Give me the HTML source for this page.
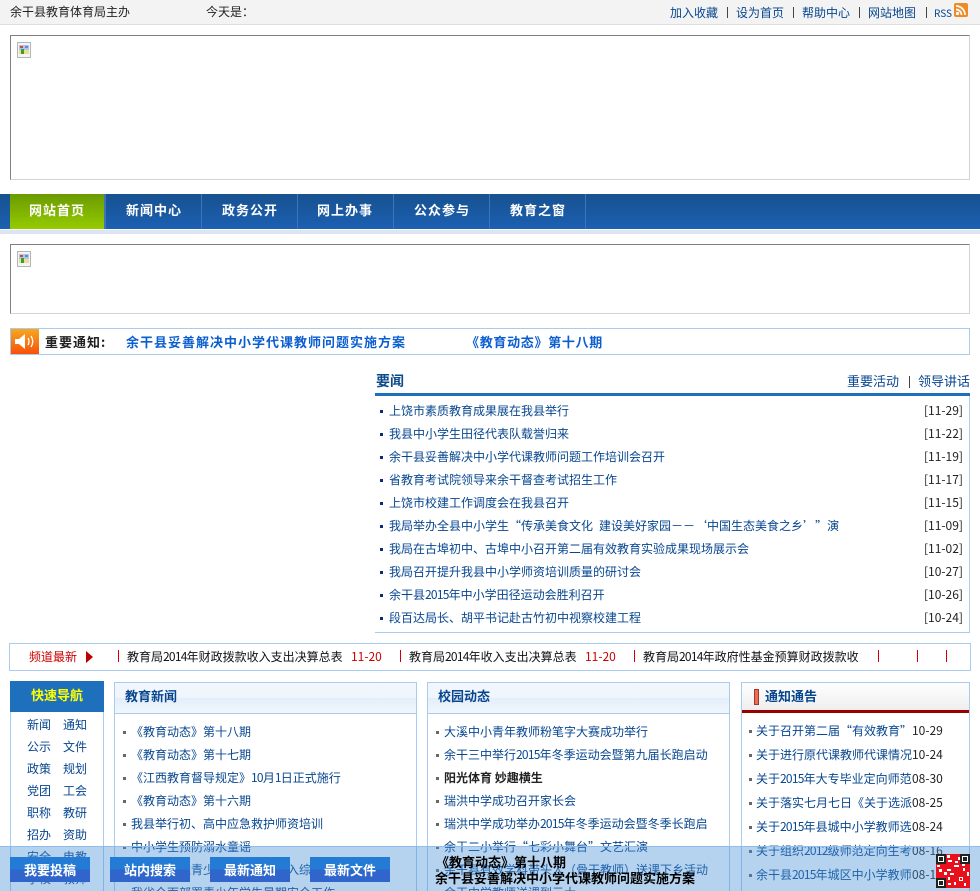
<!DOCTYPE html>
<html lang="zh"><head><meta charset="utf-8"><title>余干县教育体育局</title>
<style>
html,body{margin:0;padding:0;background:#fff;width:980px;height:891px;overflow:hidden}
#w{position:relative;width:980px;height:891px;overflow:hidden;font:12px/14px "WenQuanYi Zen Hei","Noto Sans CJK SC",sans-serif;color:#222}
.a,.t{position:absolute}
.t{white-space:nowrap;line-height:14px}
.l{color:#07468f}
.b{font-weight:bold}
.blt{position:absolute;width:3px;height:3px;background:#666}
.n{position:absolute;width:3px;height:3px;background:#0a2a80}
.img{position:absolute;left:10px;width:958px;border:1px solid;border-color:#808080 #d4d4d4 #d4d4d4 #808080;background:#fff}
.nv{position:absolute;top:202px;color:#fff;font-weight:bold;font-size:13px;letter-spacing:1px;line-height:16px;white-space:nowrap}
.sep{position:absolute;top:194px;height:35px;width:1px;background:#3f75b8}
.p{position:absolute;top:682px;height:209px;border:1px solid #a9cbee;border-bottom:0;box-sizing:border-box;background:#fff}
.ph{position:absolute;left:0;right:0;top:0;height:30px;background:linear-gradient(#f2f7fd 0,#eef5fc 50%,#e3eefa 50%,#f1f6fc 100%);border-bottom:1px solid #a9cbee}
.pt{position:absolute;top:6px;font-size:13px;font-weight:bold;color:#07468f;line-height:14px;white-space:nowrap}
.btn{position:absolute;top:857px;width:80px;height:25px;background:linear-gradient(#237bd6 0,#237bd6 50%,#3066cc 50%,#3066cc 100%);color:#fff;font-weight:bold;font-size:13px;line-height:25px;text-align:center}
.r{color:#c00}
.d{text-decoration:none;letter-spacing:-.75px}
.qo,.qc{display:inline-block;width:12px}
.qo{text-align:right}.qc{text-align:left}
.sp{display:inline-block;width:6px}
.bar{position:absolute;width:1px;height:12px;top:650px;background:#c00}
.hb{position:absolute;width:1px;height:11px;top:7px;background:#444}
</style></head><body><div id="w">

<!-- top bar -->
<div class="a" style="left:0;top:0;width:980px;height:24px;background:#f3f3f3;border-bottom:1px solid #ddd"></div>
<span class="t" style="left:10px;top:5px">余干县教育体育局主办</span>
<span class="t" style="left:206px;top:5px">今天是：</span>
<span class="t l" style="left:670px;top:6px">加入收藏</span>
<i class="hb" style="left:727px"></i>
<span class="t l" style="left:736px;top:6px">设为首页</span>
<i class="hb" style="left:793px"></i>
<span class="t l" style="left:802px;top:6px">帮助中心</span>
<i class="hb" style="left:859px"></i>
<span class="t l" style="left:868px;top:6px">网站地图</span>
<i class="hb" style="left:926px"></i>
<span class="t l" style="left:934px;top:6px;font-size:10px">RSS</span>
<svg class="a" style="left:954px;top:3px" width="14" height="14" viewBox="0 0 14 14"><rect width="14" height="14" rx="2" fill="#f08a24"/><circle cx="3.5" cy="10.5" r="1.6" fill="#fff"/><path d="M2 6.5a5.500 5.500 0 0 1 5.500 5.500M2 3a9 9 0 0 1 9 9" fill="none" stroke="#fff" stroke-width="1.700"/></svg>

<!-- banner -->
<div class="img" style="top:35px;height:143px"></div>
<svg class="a" style="left:17px;top:42px" width="14" height="16" viewBox="0 0 14 16"><rect x=".5" y=".5" width="13" height="15" fill="#f4f4f4" stroke="#b5b5b5"/><rect x="2" y="3" width="10" height="9" fill="#a8c8f0"/><rect x="2" y="8" width="10" height="4" fill="#e8e08a"/><rect x="3" y="4" width="3" height="2" fill="#d64a30"/><rect x="4" y="7" width="3" height="5" fill="#3d9a3d"/><rect x="8" y="4" width="3" height="2" fill="#7a80d8"/></svg>

<!-- nav -->
<div class="a" style="left:0;top:194px;width:980px;height:35px;background:linear-gradient(#17518f,#1c60b2)"></div>
<div class="a" style="left:0;top:230px;width:980px;height:4px;background:#dde5f2"></div>
<div class="a" style="left:10px;top:194px;width:94px;height:35px;background:linear-gradient(#6a9a00,#96cc00)"></div>
<div class="sep" style="left:104px;width:2px"></div><div class="sep" style="left:201px"></div><div class="sep" style="left:297px"></div><div class="sep" style="left:393px"></div><div class="sep" style="left:489px"></div><div class="sep" style="left:585px"></div>
<span class="nv" style="left:29px">网站首页</span>
<span class="nv" style="left:126px">新闻中心</span>
<span class="nv" style="left:222px">政务公开</span>
<span class="nv" style="left:317px">网上办事</span>
<span class="nv" style="left:414px">公众参与</span>
<span class="nv" style="left:510px">教育之窗</span>

<!-- second banner -->
<div class="img" style="top:244px;height:68px"></div>
<svg class="a" style="left:17px;top:251px" width="14" height="16" viewBox="0 0 14 16"><rect x=".5" y=".5" width="13" height="15" fill="#f4f4f4" stroke="#b5b5b5"/><rect x="2" y="3" width="10" height="9" fill="#a8c8f0"/><rect x="2" y="8" width="10" height="4" fill="#e8e08a"/><rect x="3" y="4" width="3" height="2" fill="#d64a30"/><rect x="4" y="7" width="3" height="5" fill="#3d9a3d"/><rect x="8" y="4" width="3" height="2" fill="#7a80d8"/></svg>

<!-- notice -->
<div class="a" style="left:10px;top:328px;width:958px;height:25px;border:1px solid #a9cbee"></div>
<div class="a" style="left:11px;top:329px;width:28px;height:25px;background:linear-gradient(#f6a820,#f8500a)"></div>
<svg class="a" style="left:13px;top:331px" width="22" height="21" viewBox="0 0 22 21"><path d="M2 8h4l6-5v15l-6-5H2z" fill="#fff"/><path d="M15 7q2 3.500 0 7M18 5q3.500 5.500 0 11" fill="none" stroke="#fff" stroke-width="1.300"/></svg>
<span class="t b" style="left:45px;top:335px;font-size:13px;color:#222;letter-spacing:1px">重要通知:</span>
<span class="t b" style="left:126px;top:335px;font-size:13px;color:#0a5ed0;letter-spacing:1px">余干县妥善解决中小学代课教师问题实施方案</span>
<span class="t b" style="left:466px;top:335px;font-size:13px;color:#0a5ed0;letter-spacing:.7px">《教育动态》第十八期</span>

<!-- headline news -->
<span class="t b" style="left:376px;top:374px;font-size:14px;color:#0b4a8c">要闻</span>
<span class="t l" style="left:847px;top:374px;font-size:13px">重要活动</span>
<i class="hb" style="left:909px;top:376px;height:12px"></i>
<span class="t l" style="left:918px;top:374px;font-size:13px">领导讲话</span>
<div class="a" style="left:375px;top:393px;width:595px;height:3px;background:#1e70bd"></div>
<div class="a" style="left:969px;top:396px;width:1px;height:237px;background:#a9cbee"></div>
<div class="a" style="left:375px;top:632px;width:595px;height:1px;background:#a9cbee"></div>

<i class="n" style="left:380px;top:410px"></i><span class="t l" style="left:389px;top:404px">上饶市素质教育成果展在我县举行</span><span class="t" style="left:924px;top:404px">[11-29]</span>
<i class="n" style="left:380px;top:433px"></i><span class="t l" style="left:389px;top:427px">我县中小学生田径代表队载誉归来</span><span class="t" style="left:924px;top:427px">[11-22]</span>
<i class="n" style="left:380px;top:456px"></i><span class="t l" style="left:389px;top:450px">余干县妥善解决中小学代课教师问题工作培训会召开</span><span class="t" style="left:924px;top:450px">[11-19]</span>
<i class="n" style="left:380px;top:479px"></i><span class="t l" style="left:389px;top:473px">省教育考试院领导来余干督查考试招生工作</span><span class="t" style="left:924px;top:473px">[11-17]</span>
<i class="n" style="left:380px;top:502px"></i><span class="t l" style="left:389px;top:496px">上饶市校建工作调度会在我县召开</span><span class="t" style="left:924px;top:496px">[11-15]</span>
<i class="n" style="left:380px;top:525px"></i><span class="t l" style="left:389px;top:519px">我局举办全县中小学生<span class="qo">“</span>传承美食文化<span class="sp"></span>建设美好家园－－<span class="qo">‘</span>中国生态美食之乡<span class="qc">’</span><span class="qc">”</span>演</span><span class="t" style="left:924px;top:519px">[11-09]</span>
<i class="n" style="left:380px;top:548px"></i><span class="t l" style="left:389px;top:542px">我局在古埠初中、古埠中小召开第二届有效教育实验成果现场展示会</span><span class="t" style="left:924px;top:542px">[11-02]</span>
<i class="n" style="left:380px;top:571px"></i><span class="t l" style="left:389px;top:565px">我局召开提升我县中小学师资培训质量的研讨会</span><span class="t" style="left:924px;top:565px">[10-27]</span>
<i class="n" style="left:380px;top:594px"></i><span class="t l" style="left:389px;top:588px">余干县<u class="d">2015</u>年中小学田径运动会胜利召开</span><span class="t" style="left:924px;top:588px">[10-26]</span>
<i class="n" style="left:380px;top:617px"></i><span class="t l" style="left:389px;top:611px">段百达局长、胡平书记赴古竹初中视察校建工程</span><span class="t" style="left:924px;top:611px">[10-24]</span>

<!-- ticker -->
<div class="a" style="left:9px;top:643px;width:960px;height:26px;border:1px solid #a9cbee"></div>
<span class="t r" style="left:29px;top:650px">频道最新</span>
<svg class="a" style="left:85px;top:651px" width="8" height="12"><path d="M1 0l7 6-7 6z" fill="#b00"/></svg>
<i class="bar" style="left:118px"></i>
<span class="t" style="left:127px;top:650px;color:#111">教育局<u class="d">2014</u>年财政拨款收入支出决算总表</span>
<span class="t r" style="left:351px;top:650px">11-20</span>
<i class="bar" style="left:400px"></i>
<span class="t" style="left:409px;top:650px;color:#111">教育局<u class="d">2014</u>年收入支出决算总表</span>
<span class="t r" style="left:585px;top:650px">11-20</span>
<i class="bar" style="left:634px"></i>
<span class="t" style="left:643px;top:650px;color:#111">教育局<u class="d">2014</u>年政府性基金预算财政拨款收</span>
<i class="bar" style="left:878px"></i>
<i class="bar" style="left:917px"></i>
<i class="bar" style="left:946px"></i>

<!-- quick nav -->
<div class="a" style="left:10px;top:681px;width:94px;height:31px;background:#1e70bd"></div>
<span class="t b" style="left:31px;top:688px;font-size:13px;color:#ff0">快速导航</span>
<div class="a" style="left:10px;top:712px;width:1px;height:179px;background:#a9cbee"></div>
<div class="a" style="left:103px;top:712px;width:1px;height:179px;background:#a9cbee"></div>
<span class="t l" style="left:27px;top:718px">新闻</span><span class="t l" style="left:63px;top:718px">通知</span>
<span class="t l" style="left:27px;top:740px">公示</span><span class="t l" style="left:63px;top:740px">文件</span>
<span class="t l" style="left:27px;top:762px">政策</span><span class="t l" style="left:63px;top:762px">规划</span>
<span class="t l" style="left:27px;top:784px">党团</span><span class="t l" style="left:63px;top:784px">工会</span>
<span class="t l" style="left:27px;top:806px">职称</span><span class="t l" style="left:63px;top:806px">教研</span>
<span class="t l" style="left:27px;top:828px">招办</span><span class="t l" style="left:63px;top:828px">资助</span>
<span class="t l" style="left:27px;top:850px">安全</span><span class="t l" style="left:63px;top:850px">电教</span>
<span class="t l" style="left:27px;top:872px">学校</span><span class="t l" style="left:63px;top:872px">教师</span>

<!-- 教育新闻 -->
<div class="p" style="left:114px;width:303px"><div class="ph"></div><span class="pt" style="left:10px">教育新闻</span></div>
<i class="blt" style="left:123px;top:731px"></i><span class="t l" style="left:131px;top:725px">《教育动态》第十八期</span>
<i class="blt" style="left:123px;top:754px"></i><span class="t l" style="left:131px;top:748px">《教育动态》第十七期</span>
<i class="blt" style="left:123px;top:777px"></i><span class="t l" style="left:131px;top:771px">《江西教育督导规定》<u class="d">10</u>月<u class="d">1</u>日正式施行</span>
<i class="blt" style="left:123px;top:800px"></i><span class="t l" style="left:131px;top:794px">《教育动态》第十六期</span>
<i class="blt" style="left:123px;top:823px"></i><span class="t l" style="left:131px;top:817px">我县举行初、高中应急救护师资培训</span>
<i class="blt" style="left:123px;top:846px"></i><span class="t l" style="left:131px;top:840px">中小学生预防溺水童谣</span>
<i class="blt" style="left:123px;top:869px"></i><span class="t l" style="left:131px;top:863px">关于全面推青少年学生工作纳入综合治理</span>
<span class="t l" style="left:131px;top:886px">我省全面部署青少年学生暑期安全工作</span>

<!-- 校园动态 -->
<div class="p" style="left:427px;width:303px"><div class="ph"></div><span class="pt" style="left:10px">校园动态</span></div>
<i class="blt" style="left:436px;top:731px"></i><span class="t l" style="left:444px;top:725px">大溪中小青年教师粉笔字大赛成功举行</span>
<i class="blt" style="left:436px;top:754px"></i><span class="t l" style="left:444px;top:748px">余干三中举行<u class="d">2015</u>年冬季运动会暨第九届长跑启动</span>
<i class="blt" style="left:436px;top:777px"></i><span class="t b" style="left:444px;top:771px;color:#222">阳光体育 妙趣横生</span>
<i class="blt" style="left:436px;top:800px"></i><span class="t l" style="left:444px;top:794px">瑞洪中学成功召开家长会</span>
<i class="blt" style="left:436px;top:823px"></i><span class="t l" style="left:444px;top:817px">瑞洪中学成功举办<u class="d">2015</u>年冬季运动会暨冬季长跑启</span>
<i class="blt" style="left:436px;top:846px"></i><span class="t l" style="left:444px;top:840px">余干二小举行<span class="qo">“</span>七彩小舞台<span class="qc">”</span>文艺汇演</span>
<i class="blt" style="left:436px;top:869px"></i><span class="t l" style="left:444px;top:863px">余干县有效学科带头人（骨干教师）送课下乡活动</span>
<span class="t l" style="left:444px;top:886px">余干中学教师送课到元大</span>

<!-- 通知通告 -->
<div class="p" style="left:741px;width:229px">
  <div class="a" style="left:0;right:0;top:0;height:27px;background:linear-gradient(#fff,#eee)"></div>
  <div class="a" style="left:0;right:0;top:27px;height:3px;background:#990000"></div>
  <div class="a" style="left:12px;top:6px;width:3px;height:14px;background:#e8704a;border:1px solid #a33"></div>
  <span class="pt" style="left:23px">通知通告</span>
</div>
<i class="blt" style="left:749px;top:730px"></i><span class="t l" style="left:756px;top:724px">关于召开第二届<span class="qo">“</span>有效教育<span class="qc">”</span></span><span class="t" style="left:912px;top:724px">10-29</span>
<i class="blt" style="left:749px;top:754px"></i><span class="t l" style="left:756px;top:748px">关于进行原代课教师代课情况</span><span class="t" style="left:912px;top:748px">10-24</span>
<i class="blt" style="left:749px;top:778px"></i><span class="t l" style="left:756px;top:772px">关于<u class="d">2015</u>年大专毕业定向师范</span><span class="t" style="left:912px;top:772px">08-30</span>
<i class="blt" style="left:749px;top:802px"></i><span class="t l" style="left:756px;top:796px">关于落实七月七日《关于选派</span><span class="t" style="left:912px;top:796px">08-25</span>
<i class="blt" style="left:749px;top:826px"></i><span class="t l" style="left:756px;top:820px">关于<u class="d">2015</u>年县城中小学教师选</span><span class="t" style="left:912px;top:820px">08-24</span>
<i class="blt" style="left:749px;top:850px"></i><span class="t l" style="left:756px;top:844px">关于组织<u class="d">2012</u>级师范定向生考</span><span class="t" style="left:912px;top:844px">08-16</span>
<i class="blt" style="left:749px;top:874px"></i><span class="t l" style="left:756px;top:868px">余干县<u class="d">2015</u>年城区中小学教师</span><span class="t" style="left:912px;top:868px">08-14</span>

<!-- floating bar -->
<div class="a" style="left:0;top:846px;width:980px;height:45px;background:rgba(70,142,212,.4);border-top:1px solid #8fbce8;box-sizing:border-box"></div>
<div class="btn" style="left:10px">我要投稿</div>
<div class="btn" style="left:110px">站内搜索</div>
<div class="btn" style="left:210px">最新通知</div>
<div class="btn" style="left:310px">最新文件</div>
<span class="t b" style="left:436px;top:855px;color:#000;font-size:13px">《教育动态》第十八期</span>
<span class="t b" style="left:435px;top:871px;color:#000;font-size:13px">余干县妥善解决中小学代课教师问题实施方案</span>
<svg class="a" style="left:936px;top:854px" width="34" height="34" viewBox="0 0 34 34" shape-rendering="crispEdges">
<rect width="34" height="34" fill="#e8101a"/>
<path d="M11 1h3v3h-3zM22 3h2v3h-2zM12 6h4v2h-4zM19 7h3v2h-3zM1 11h3v2H1zM18 11h5v2h-5zM26 10h3v2h-3zM3 15h3v3H3zM11 15h4v2h-4zM27 14h2v3h-2zM8 18h3v3H8zM14 19h4v2h-4zM31 18h2v4h-2zM12 23h2v3h-2zM23 23h4v4h-4zM12 29h3v2h-3zM18 28h2v3h-2zM28 29h2v3h-2z" fill="#fff"/>
<rect x="24" y="24" width="2" height="2" fill="#e8101a"/>
<g><rect width="10" height="10" fill="#222"/><rect x="24" width="10" height="10" fill="#222"/><rect y="24" width="10" height="10" fill="#222"/>
<rect x="2" y="2" width="6" height="6" fill="#fff"/><rect x="26" y="2" width="6" height="6" fill="#fff"/><rect x="2" y="26" width="6" height="6" fill="#fff"/>
<rect x="3" y="3" width="4" height="4" fill="#222"/><rect x="27" y="3" width="4" height="4" fill="#222"/><rect x="3" y="27" width="4" height="4" fill="#222"/></g>
</svg>
</div></body></html>
